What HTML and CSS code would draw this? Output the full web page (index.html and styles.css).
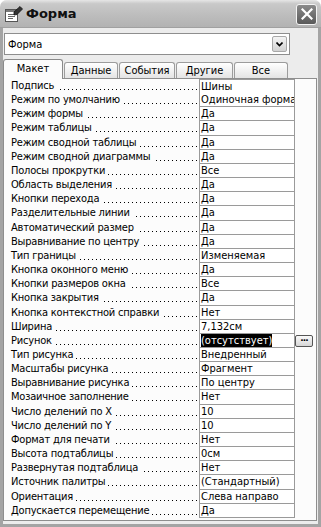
FILE: index.html
```
<!DOCTYPE html>
<html lang="ru">
<head>
  <meta charset="UTF-8" />
  <title>Форма</title>
  <link rel="stylesheet" href="styles.css">
</head>
<body>

  <div class="okno">
    <div class="zagolovok">
      <svg class="zagolovok-ikonka" width="18" height="16" viewBox="0 0 18 16">
        <rect x="0.5" y="3.5" width="12" height="12" fill="#fff" stroke="#555"/>
        <rect x="1" y="4" width="11" height="2" fill="#777"/>
        <line x1="3" y1="8.5" x2="10" y2="8.5" stroke="#666"/>
        <line x1="3" y1="10.5" x2="10" y2="10.5" stroke="#666"/>
        <line x1="3" y1="12.5" x2="8" y2="12.5" stroke="#666"/>
        <path d="M9 6 L15 0.5 L17.5 3 L12 8.5 L9 9 Z" fill="#333" stroke="#111" stroke-width="0.8"/>
      </svg>
      <span class="zagolovok-tekst">Форма</span>
      <div class="zakryt">
        <svg width="12" height="12" viewBox="0 0 12 12">
          <path d="M1.5 1.5 L10.5 10.5 M10.5 1.5 L1.5 10.5" stroke="#fff" stroke-width="2.2" stroke-linecap="square"/>
        </svg>
      </div>
    </div>

    <div class="telo">
      <div class="spisok">
        <span class="spisok-tekst">Форма</span>
        <span class="strelka">
          <svg width="7" height="5" viewBox="0 0 7 5">
            <path d="M0.5 0.5 L3.5 3.5 L6.5 0.5" fill="none" stroke="#000" stroke-width="1.6"/>
          </svg>
        </span>
      </div>

      <div class="vkladki">
        <div class="vkladka aktivnaya" style="width:60px">Макет</div>
        <div class="vkladka" style="width:54px">Данные</div>
        <div class="vkladka" style="width:56px">События</div>
        <div class="vkladka" style="width:57px">Другие</div>
        <div class="vkladka" style="width:54px">Все</div>
      </div>

      <div class="panel">
        <div class="svoistva" id="svoistva"></div>
      </div>
    </div>
  </div>

  <script>
    const svoistva = [
      ["Подпись", "Шины"],
      ["Режим по умолчанию", "Одиночная форма"],
      ["Режим формы", "Да"],
      ["Режим таблицы", "Да"],
      ["Режим сводной таблицы", "Да"],
      ["Режим сводной диаграммы", "Да"],
      ["Полосы прокрутки", "Все"],
      ["Область выделения", "Да"],
      ["Кнопки перехода", "Да"],
      ["Разделительные линии", "Да"],
      ["Автоматический размер", "Да"],
      ["Выравнивание по центру", "Да"],
      ["Тип границы", "Изменяемая"],
      ["Кнопка оконного меню", "Да"],
      ["Кнопки размеров окна", "Все"],
      ["Кнопка закрытия", "Да"],
      ["Кнопка контекстной справки", "Нет"],
      ["Ширина", "7,132см"],
      ["Рисунок", "(отсутствует)", true],
      ["Тип рисунка", "Внедренный"],
      ["Масштабы рисунка", "Фрагмент"],
      ["Выравнивание рисунка", "По центру"],
      ["Мозаичное заполнение", "Нет"],
      ["Число делений по X", "10"],
      ["Число делений по Y", "10"],
      ["Формат для печати", "Нет"],
      ["Высота подтаблицы", "0см"],
      ["Развернутая подтаблица", "Нет"],
      ["Источник палитры", "(Стандартный)"],
      ["Ориентация", "Слева направо"],
      ["Допускается перемещение", "Да"]
    ];

    const spisok = document.getElementById('svoistva');
    svoistva.forEach(([imya, znachenie, vybrano]) => {
      const stroka = document.createElement('div');
      stroka.className = 'stroka';

      const yacheikaImya = document.createElement('div');
      yacheikaImya.className = 'imya';
      const tekst = document.createElement('span');
      tekst.textContent = imya;
      yacheikaImya.appendChild(tekst);

      const yacheikaZnach = document.createElement('div');
      yacheikaZnach.className = 'znachenie';
      if (vybrano) {
        const vydel = document.createElement('span');
        vydel.className = 'vydeleno';
        vydel.textContent = znachenie;
        yacheikaZnach.appendChild(vydel);
      } else {
        yacheikaZnach.textContent = znachenie;
      }

      const mesto = document.createElement('div');
      mesto.className = 'mesto-knopki';
      if (vybrano) {
        const knopka = document.createElement('div');
        knopka.className = 'knopka-postroit';
        knopka.innerHTML = '<span>...</span>';
        mesto.appendChild(knopka);
      }

      stroka.append(yacheikaImya, yacheikaZnach, mesto);
      spisok.appendChild(stroka);
    });
  </script>
</body>
</html>
```

FILE: styles.css
```
body {
  margin: 0;
  font-family: 'DejaVu Sans Condensed', 'DejaVu Sans', sans-serif;
  background-color: #ffffff;
  color: #000;
}

.okno {
  width: 321px;
  height: 527px;
  display: flex;
  flex-direction: column;
  border-radius: 7px 7px 0 0;
  overflow: hidden;
  background-color: #ececec;
}

.zagolovok {
  height: 28px;
  flex-shrink: 0;
  display: flex;
  align-items: center;
  padding: 0 4px 0 5px;
  box-sizing: border-box;
  background: linear-gradient(to bottom, #e6e6e6 0%, #c9c9c9 14%, #bdbdbd 55%, #b2b2b2 100%);
  border-bottom: 1px solid #a0a0a0;
}

.zagolovok-ikonka {
  margin-top: 1px;
}

.zagolovok-tekst {
  margin-left: 3px;
  font-family: 'DejaVu Sans', sans-serif;
  font-size: 13px;
  font-weight: bold;
  color: #111;
  flex: 1;
}

.zakryt {
  width: 19px;
  height: 19px;
  border: 1px solid #f4f4f4;
  border-radius: 3px;
  background: linear-gradient(to bottom, #8a8a8a, #5a5a5a);
  display: flex;
  justify-content: center;
  align-items: center;
  margin-top: 1px;
}

.telo {
  flex: 1;
  display: flex;
  flex-direction: column;
  padding: 5px 1px 3px 0;
  border-left: 3px solid #a4a4a4;
  border-right: 3px solid #a4a4a4;
  border-bottom: 3px solid #a4a4a4;
  background-color: #ececec;
}

.spisok {
  width: 286px;
  height: 22px;
  margin-left: 1px;
  box-sizing: border-box;
  border: 1px solid #8e8e8e;
  background-color: #fff;
  display: flex;
  align-items: center;
  justify-content: space-between;
  padding: 0 2px 0 3px;
}

.spisok-tekst {
  font-size: 11px;
}

.strelka {
  width: 15px;
  height: 16px;
  box-sizing: border-box;
  border: 1px solid #a8a8a8;
  border-radius: 2px;
  background: linear-gradient(to bottom, #f4f4f4, #d2d2d2);
  display: flex;
  justify-content: center;
  align-items: center;
}

.vkladki {
  height: 20px;
  margin-top: 3px;
  display: flex;
  align-items: flex-end;
  position: relative;
  z-index: 1;
}

.vkladka {
  height: 16px;
  box-sizing: border-box;
  margin-right: 1px;
  border: 1px solid #9c9c9c;
  border-bottom: none;
  border-radius: 3px 3px 0 0;
  background: linear-gradient(to bottom, #ffffff, #e4e4e4);
  font-size: 11px;
  text-align: center;
  line-height: 15px;
}

.vkladka.aktivnaya {
  height: 20px;
  margin-bottom: -1px;
  background: #fcfcfc;
  border-color: #8a8a8a;
  line-height: 17px;
}

.panel {
  width: 314px;
  height: 443px;
  box-sizing: border-box;
  border: 1px solid #8e8e8e;
  background-color: #fcfcfc;
}

.svoistva {
  display: flex;
  flex-direction: column;
}

.stroka {
  display: grid;
  grid-template-columns: 195px 96px 1fr;
  height: 14.17px;
  font-size: 11px;
  line-height: 13px;
}

.stroka:first-child .znachenie {
  border-top: 1px solid #9a9a9a;
  height: 14.17px;
}

.imya {
  padding: 0 2px 0 7px;
  background-image: linear-gradient(to right, #000 1px, transparent 1px);
  background-size: 4px 1px;
  background-repeat: repeat-x;
  background-position: 1px 10px;
  background-clip: content-box;
  background-origin: content-box;
  white-space: nowrap;
  overflow: hidden;
  letter-spacing: -0.2px;
}

.imya span {
  background-color: #fcfcfc;
  padding-right: 3px;
}

.znachenie {
  border-left: 1px solid #9a9a9a;
  border-right: 1px solid #9a9a9a;
  border-bottom: 1px solid #9a9a9a;
  background-color: #fff;
  padding-left: 1px;
  white-space: nowrap;
  overflow: hidden;
}

.vydeleno {
  background-color: #000;
  color: #fff;
  display: inline-block;
  height: 13px;
}

.mesto-knopki {
  display: flex;
  align-items: center;
}

.knopka-postroit {
  width: 18px;
  height: 12px;
  box-sizing: border-box;
  border: 1px solid #555;
  border-radius: 2px;
  background: linear-gradient(to bottom, #fafafa, #d6d6d6);
  display: flex;
  justify-content: center;
  align-items: center;
}

.knopka-postroit span {
  font-family: 'DejaVu Sans', sans-serif;
  font-size: 9px;
  font-weight: bold;
  line-height: 9px;
  height: 9px;
  margin-top: -4px;
  letter-spacing: -1px;
}
```
